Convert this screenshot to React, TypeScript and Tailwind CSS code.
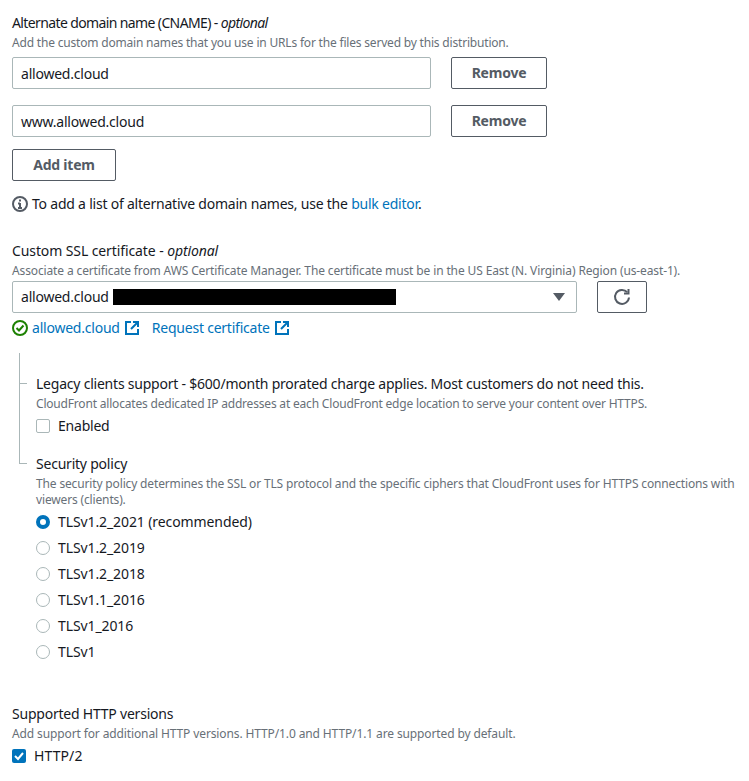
const policies = ['TLSv1.2_2021 (recommended)', 'TLSv1.2_2019', 'TLSv1.2_2018', 'TLSv1.1_2016', 'TLSv1_2016', 'TLSv1'];

function Hint({ children, className = 'tracking-[-0.19px]' }: { children: React.ReactNode; className?: string }) {
  return <div className={`text-[12px] leading-[16px] text-[#687078] mt-[2px] ${className}`}>{children}</div>;
}

function DomainRow({ value, mt }: { value: string; mt: string }) {
  return (
    <div className={`flex ${mt}`}>
      <div className="w-[419px] h-[32px] border border-[#aab7b8] rounded-[2px] pl-2 pt-[2px] flex items-center">{value}</div>
      <button className="ml-[20px] w-[96px] h-[32px] border border-[#545b64] rounded-[2px] font-bold text-[#545b64]">Remove</button>
    </div>
  );
}

function ExternalIcon() {
  return (
    <svg width="14" height="14" viewBox="0 0 14 14" fill="none" stroke="#0073bb" strokeWidth="2">
      <path d="M6 1H1v12h12V8" />
      <path d="M8 1h5v5M13 1 6 8" />
    </svg>
  );
}

export default function App() {
  return (
    <div className="w-[749px] h-[781px] overflow-hidden bg-white pl-[12px] pt-[13px] text-[14px] leading-[20px] tracking-[-0.22px] text-[#16191f] font-['Noto_Sans',sans-serif]">
      <div className="tracking-[-0.62px]">Alternate domain name (CNAME) - <i>optional</i></div>
      <Hint>Add the custom domain names that you use in URLs for the files served by this distribution.</Hint>
      <DomainRow value="allowed.cloud" mt="mt-[6px]" />
      <DomainRow value="www.allowed.cloud" mt="mt-[16px]" />
      <button className="mt-[12px] block w-[104px] h-[32px] border border-[#545b64] rounded-[2px] font-bold text-[#545b64]">Add item</button>
      <div className="mt-[13px] flex items-center h-[20px]">
        <svg width="16" height="16" viewBox="0 0 16 16" fill="none" stroke="#545b64" strokeWidth="2" className="mr-[4px]">
          <circle cx="8" cy="8" r="7" />
          <path d="M8 7v5M6 12h4M6 7.5h2M8 3.5v2" />
        </svg>
        <span>To add a list of alternative domain names, use the <span className="text-[#0073bb]">bulk editor</span>.</span>
      </div>

      <div className="mt-[27px] tracking-[-0.1px]">Custom SSL certificate - <i>optional</i></div>
      <Hint className="tracking-[-0.13px]">Associate a certificate from AWS Certificate Manager. The certificate must be in the US East (N. Virginia) Region (us-east-1).</Hint>
      <div className="flex mt-[2px]">
        <div className="w-[565px] h-[32px] border border-[#aab7b8] rounded-[2px] pl-2 pr-[11px] flex items-center">
          <span>allowed.cloud</span>
          <span className="ml-[4px] w-[283px] h-[16px] bg-black" />
          <svg className="ml-auto" width="12" height="8" viewBox="0 0 12 8" fill="#545b64"><path d="M0 0h12L6 8z" /></svg>
        </div>
        <button className="ml-[20px] w-[50px] h-[32px] border border-[#545b64] rounded-[2px] flex items-center justify-center">
          <svg width="18" height="18" viewBox="0 0 18 18" fill="none" stroke="#545b64" strokeWidth="2">
            <path d="M14.2 4.2A7 7 0 1 0 16 9.5" />
            <path d="M15.5 1v4.5H11" />
          </svg>
        </button>
      </div>
      <div className="flex items-center mt-[5px] h-[20px] text-[#0073bb]">
        <svg width="16" height="16" viewBox="0 0 16 16" fill="none" stroke="#1d8102" strokeWidth="2" className="mr-[4px]">
          <circle cx="8" cy="8" r="7" />
          <path d="m4.5 8 2.5 2.5 4.5-5" />
        </svg>
        <span>allowed.cloud</span>
        <span className="ml-[5px] flex"><ExternalIcon /></span>
        <span className="ml-[13px]">Request certificate</span>
        <span className="ml-[5px] flex"><ExternalIcon /></span>
      </div>

      <div className="relative mt-[15px] ml-[24px] pt-[21px]">
        <span className="absolute left-[-17px] top-0 w-[1px] h-[111px] bg-[#aab7b8]" />
        <span className="absolute left-[-17px] top-[30px] w-[8px] h-[1px] bg-[#aab7b8]" />
        <span className="absolute left-[-17px] top-[110px] w-[8px] h-[1px] bg-[#aab7b8]" />
        <div>Legacy clients support - $600/month prorated charge applies. Most customers do not need this.</div>
        <Hint>CloudFront allocates dedicated IP addresses at each CloudFront edge location to serve your content over HTTPS.</Hint>
        <div className="flex items-center mt-[4px] h-[20px]">
          <span className="w-[14px] h-[14px] border border-[#aab7b8] rounded-[2px] mr-[8px]" />
          <span>Enabled</span>
        </div>
        <div className="mt-[18px]">Security policy</div>
        <Hint className="w-[701px] tracking-[-0.15px]">The security policy determines the SSL or TLS protocol and the specific ciphers that CloudFront uses for HTTPS connections with viewers (clients).</Hint>
        <div className="mt-[4px] flex flex-col gap-[6px]">
          {policies.map((p, i) => (
            <div key={p} className="flex items-center h-[20px] tracking-[-0.1px]">
              {i === 0 ? (
                <span className="w-[14px] h-[14px] rounded-full border-[4px] border-[#0073bb] mr-[8px]" />
              ) : (
                <span className="w-[14px] h-[14px] rounded-full border border-[#aab7b8] mr-[8px]" />
              )}
              <span>{p}</span>
            </div>
          ))}
        </div>
      </div>

      <div className="mt-[42px]">Supported HTTP versions</div>
      <Hint className="tracking-[-0.12px]">Add support for additional HTTP versions. HTTP/1.0 and HTTP/1.1 are supported by default.</Hint>
      <div className="flex items-center mt-[4px] h-[20px]">
        <span className="w-[14px] h-[14px] bg-[#0073bb] rounded-[2px] mr-[8px] flex items-center justify-center">
          <svg width="10" height="10" viewBox="0 0 10 10" fill="none" stroke="white" strokeWidth="2"><path d="m1 5 3 3 5-6" /></svg>
        </span>
        <span className="tracking-[0.1px]">HTTP/2</span>
      </div>
    </div>
  );
}
